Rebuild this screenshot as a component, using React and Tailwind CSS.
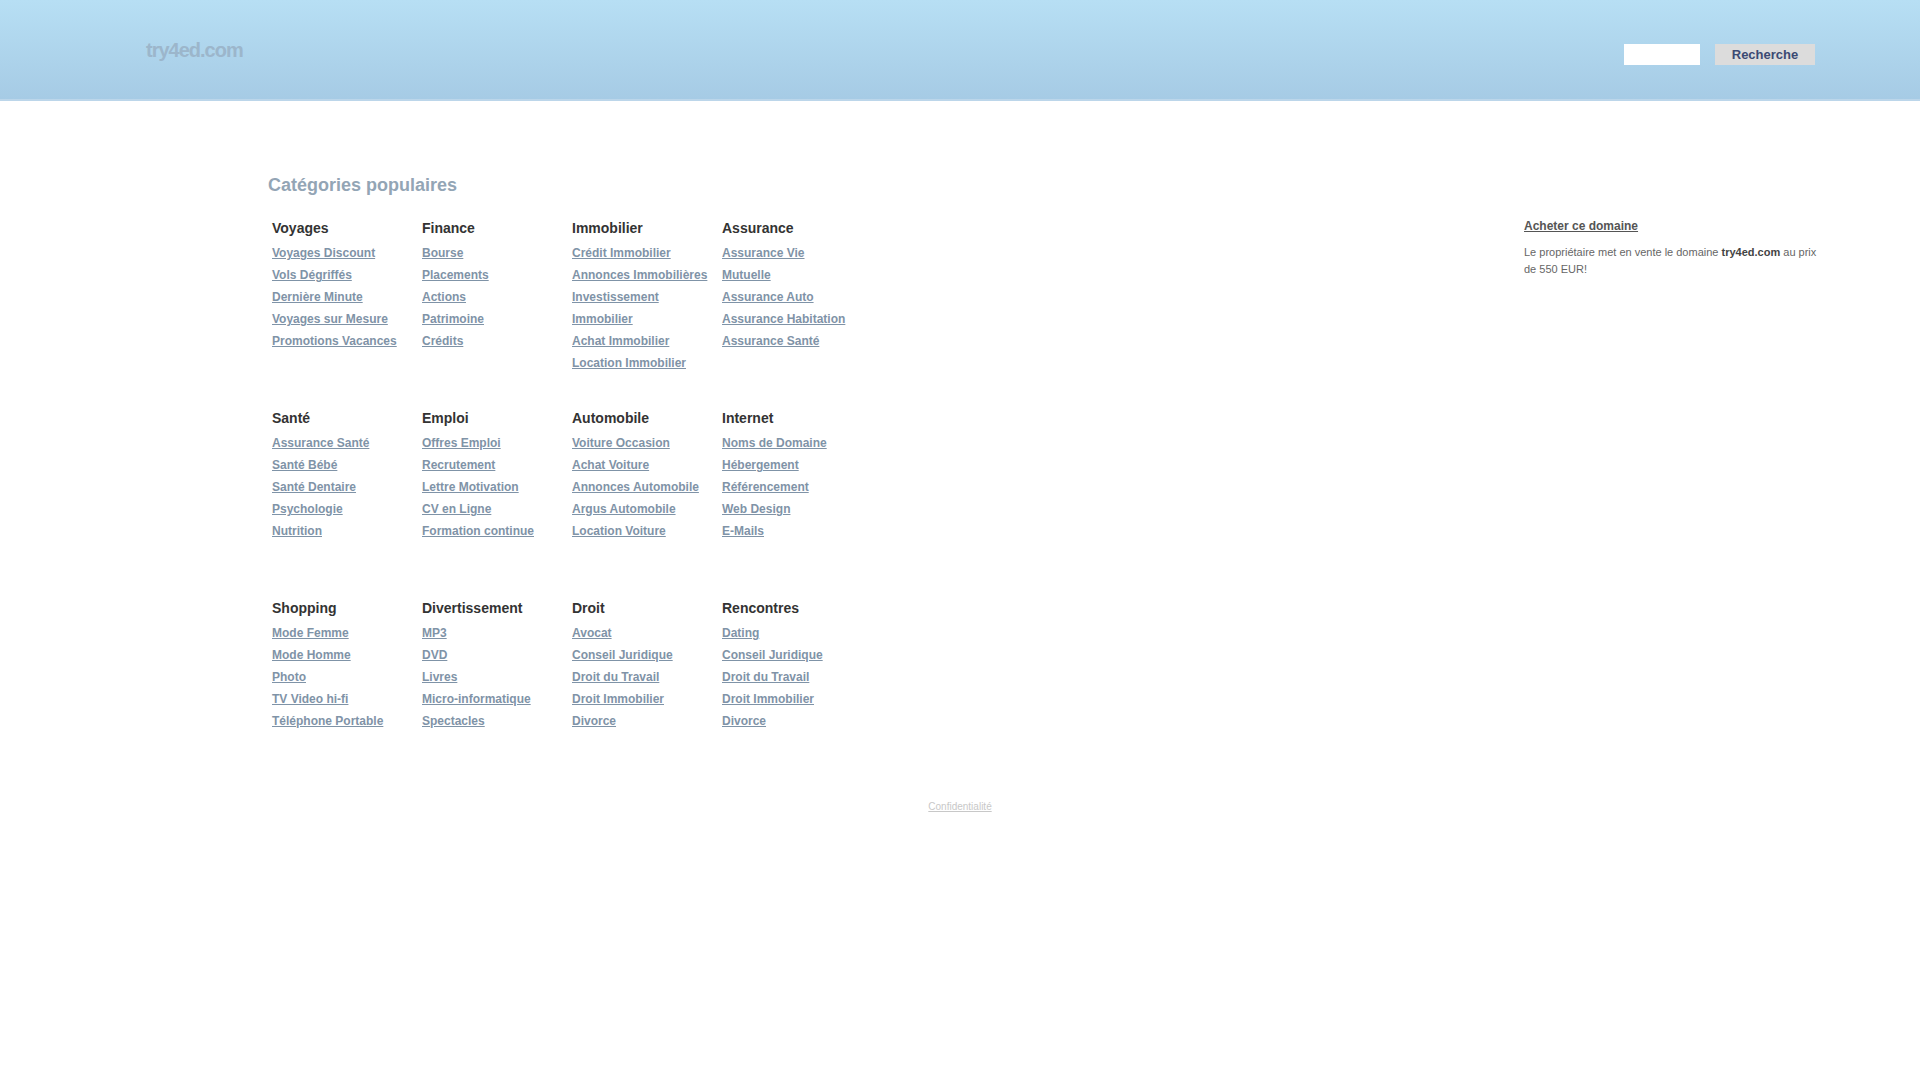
import React from 'react'

const sections = [
  [
    { title: 'Voyages', links: ['Voyages Discount', 'Vols Dégriffés', 'Dernière Minute', 'Voyages sur Mesure', 'Promotions Vacances'] },
    { title: 'Finance', links: ['Bourse', 'Placements', 'Actions', 'Patrimoine', 'Crédits'] },
    { title: 'Immobilier', links: ['Crédit Immobilier', 'Annonces Immobilières', 'Investissement Immobilier', 'Achat Immobilier', 'Location Immobilier'] },
    { title: 'Assurance', links: ['Assurance Vie', 'Mutuelle', 'Assurance Auto', 'Assurance Habitation', 'Assurance Santé'] },
  ],
  [
    { title: 'Santé', links: ['Assurance Santé', 'Santé Bébé', 'Santé Dentaire', 'Psychologie', 'Nutrition'] },
    { title: 'Emploi', links: ['Offres Emploi', 'Recrutement', 'Lettre Motivation', 'CV en Ligne', 'Formation continue'] },
    { title: 'Automobile', links: ['Voiture Occasion', 'Achat Voiture', 'Annonces Automobile', 'Argus Automobile', 'Location Voiture'] },
    { title: 'Internet', links: ['Noms de Domaine', 'Hébergement', 'Référencement', 'Web Design', 'E-Mails'] },
  ],
  [
    { title: 'Shopping', links: ['Mode Femme', 'Mode Homme', 'Photo', 'TV Video hi-fi', 'Téléphone Portable'] },
    { title: 'Divertissement', links: ['MP3', 'DVD', 'Livres', 'Micro-informatique', 'Spectacles'] },
    { title: 'Droit', links: ['Avocat', 'Conseil Juridique', 'Droit du Travail', 'Droit Immobilier', 'Divorce'] },
    { title: 'Rencontres', links: ['Dating', 'Conseil Juridique', 'Droit du Travail', 'Droit Immobilier', 'Divorce'] },
  ],
]

const Category = ({ c }) => (
  <div className="w-[150px] pl-[4px] pr-[10px]">
    <h3 className="text-[14px] leading-[20px] font-bold text-[#333333] mb-[4px]">{c.title}</h3>
    <ul>
      {c.links.map((l, i) => (
        <li key={i} className="text-[12px] leading-[22px] font-bold">
          <a href="#" className="text-[#7f93a7] underline">{l}</a>
        </li>
      ))}
    </ul>
  </div>
)

const App = () => {
  return (
    <div className="min-h-screen bg-white font-['Liberation_Sans',Arial,sans-serif]">
      {/* header */}
      <div className="h-[101px] flex items-start justify-between pl-[146px] pr-[105px] bg-gradient-to-b from-[#b7dff4] to-[#a6cbe5] border-b-2 border-[#bcd6ea]">
        <div className="mt-[38px] text-[20px] leading-[24px] font-bold tracking-[-1px] text-[#9cb6cb]">try4ed.com</div>
        <div className="mt-[44px] flex items-center gap-[15px]">
          <input type="text" className="w-[76px] h-[21px] bg-white border-0 outline-none px-1 text-[12px]" />
          <button className="w-[100px] h-[21px] bg-[#dcdcdc] text-[13px] leading-[21px] font-bold text-[#3b4a73]">Recherche</button>
        </div>
      </div>

      {/* contenu */}
      <div className="flex pl-[268px] pr-[96px] pt-[72px]">
        <div className="w-[600px]">
          <h2 className="text-[18px] leading-[24px] font-bold text-[#93a5b5] mb-[21px]">Catégories populaires</h2>
          {sections.map((row, i) => (
            <div key={i} className="flex h-[190px]">
              {row.map((c, j) => (
                <Category key={j} c={c} />
              ))}
            </div>
          ))}
        </div>
        <div className="ml-auto w-[300px] pt-[45px]">
          <a href="#" className="block text-[12px] leading-[16px] font-bold text-[#555555] underline">Acheter ce domaine</a>
          <p className="mt-[10px] text-[11px] leading-[17px] text-[#666666]">
            Le propriétaire met en vente le domaine <b className="text-[#444444]">try4ed.com</b> au prix de 550 EUR!
          </p>
        </div>
      </div>

      <div className="text-center mt-[5px]">
        <a href="#" className="text-[10px] leading-[14px] text-[#c8c8c8] underline">Confidentialité</a>
      </div>
    </div>
  )
}

export default App
